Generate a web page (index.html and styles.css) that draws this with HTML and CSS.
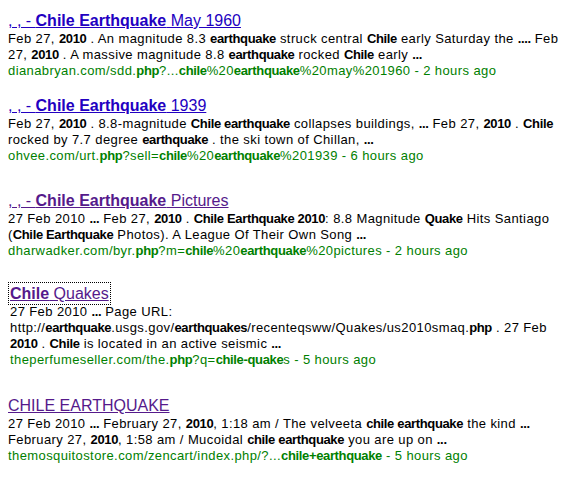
FILE: index.html
```html
<!DOCTYPE html>
<html>
<head>
<meta charset="utf-8">
<link rel="stylesheet" href="styles.css">
</head>
<body>
<div class="results">
  <div class="result r1">
    <a class="title" href="#">, , - <b>Chile Earthquake</b> May 1960</a>
    <div class="snippet">Feb 27, <b>2010</b> . An magnitude 8.3 <b>earthquake</b> struck central <b>Chile</b> early Saturday the <b>....</b> Feb 27, <b>2010</b> . A massive magnitude 8.8 <b>earthquake</b> rocked <b>Chile</b> early <b>...</b></div>
    <div class="url">dianabryan.com/sdd.<b>php</b>?...<b>chile</b>%20<b>earthquake</b>%20may%201960 - 2 hours ago</div>
  </div>
  <div class="result r2">
    <a class="title" href="#">, , - <b>Chile Earthquake</b> 1939</a>
    <div class="snippet">Feb 27, <b>2010</b> . 8.8-magnitude <b>Chile earthquake</b> collapses buildings, <b>...</b> Feb 27, <b>2010</b> . <b>Chile</b> rocked by 7.7 degree <b>earthquake</b> . the ski town of Chillan, <b>...</b></div>
    <div class="url">ohvee.com/urt.<b>php</b>?sell=<b>chile</b>%20<b>earthquake</b>%201939 - 6 hours ago</div>
  </div>
  <div class="result r3">
    <a class="title visited" href="#">, , - <b>Chile Earthquake</b> Pictures</a>
    <div class="snippet">27 Feb 2010 <b>...</b> Feb 27, <b>2010</b> . <b>Chile Earthquake 2010</b>: 8.8 Magnitude <b>Quake</b> Hits Santiago (<b>Chile Earthquake</b> Photos). A League Of Their Own Song <b>...</b></div>
    <div class="url">dharwadker.com/byr.<b>php</b>?m=<b>chile</b>%20<b>earthquake</b>%20pictures - 2 hours ago</div>
  </div>
  <div class="result r4">
    <a class="title visited focused" href="#"><b>Chile</b> Quakes</a>
    <div class="snippet">27 Feb 2010 <b>...</b> Page URL: http://<b>earthquake</b>.usgs.gov/<b>earthquakes</b>/recenteqsww/Quakes/us2010smaq.<b>php</b> . 27 Feb <b>2010</b> . <b>Chile</b> is located in an active seismic <b>...</b></div>
    <div class="url">theperfumeseller.com/the.<b>php</b>?q=<b>chile-quake</b>s - 5 hours ago</div>
  </div>
  <div class="result r5">
    <a class="title visited" href="#">CHILE EARTHQUAKE</a>
    <div class="snippet">27 Feb 2010 <b>...</b> February 27, <b>2010</b>, 1:18 am / The velveeta <b>chile earthquake</b> the kind <b>...</b> February 27, <b>2010</b>, 1:58 am / Mucoidal <b>chile earthquake</b> you are up on <b>...</b></div>
    <div class="url">themosquitostore.com/zencart/index.php/?...<b>chile+earthquake</b> - 5 hours ago</div>
  </div>
</div>
</body>
</html>
```
FILE: styles.css
```css
html, body {
  margin: 0;
  padding: 0;
  background: #fff;
}
body {
  font-family: "Liberation Sans", Arial, sans-serif;
  color: #000;
}
.results {
  padding: 11px 8px 0 8px;
  width: 556px;
}
.result {
  display: flex;
  flex-direction: column;
  align-items: flex-start;
}
.title {
  font-size: 16px;
  line-height: 19px;
  color: #2200c1;
  text-decoration: underline;
  margin-bottom: 1px;
}
.title.visited {
  color: #551a8b;
}
.title.focused {
  outline: 1px dotted #000;
  outline-offset: 1px;
}
.snippet,
.url {
  font-size: 13px;
  line-height: 16px;
  letter-spacing: 0.4px;
}
.snippet b,
.url b {
  letter-spacing: -0.35px;
}
.url {
  color: #008000;
}
.r1 { margin-bottom: 17px; }
.r2 { margin-bottom: 27px; }
.r3 { margin-bottom: 25px; }
.r4 { margin-bottom: 28px; padding-left: 2px; }
```
